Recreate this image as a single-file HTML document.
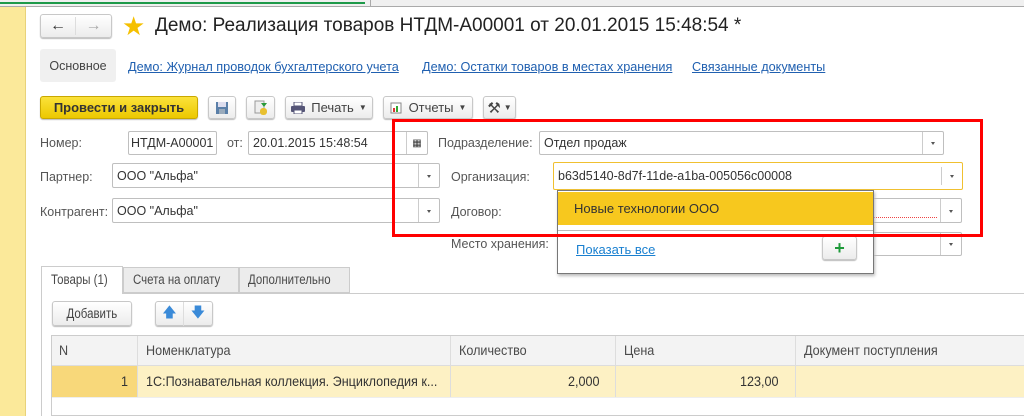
<!DOCTYPE html>
<html><head><meta charset="utf-8"><style>
*{box-sizing:border-box;margin:0;padding:0}
body{width:1024px;height:416px;overflow:hidden;background:#fff;font-family:"Liberation Sans",Arial,sans-serif;font-size:13px;color:#4a4a4a;position:relative}
.a{position:absolute;white-space:nowrap}
.inp{position:absolute;border:1px solid #bfbfbf;border-radius:2px;background:#fff;color:#333;font-size:12.5px;padding-left:4px;display:flex;align-items:center;white-space:nowrap;overflow:hidden}
.dd{position:absolute;right:0;top:0;bottom:0;width:21px;border-left:1px solid #ccc}
.dd:after{content:"";position:absolute;left:8px;top:50%;margin-top:-1px;border:2.5px solid transparent;border-top:3px solid #555}
.btn{position:absolute;border:1px solid #c8c8c8;border-radius:3px;background:linear-gradient(#fff,#ececec);box-shadow:0 1px 1px #bbb;display:flex;align-items:center;justify-content:center;color:#444;font-size:13px;white-space:nowrap}
.lnk{position:absolute;color:#2060b0;text-decoration:underline;font-size:12.7px;white-space:nowrap}
.lbl{position:absolute;font-size:12.5px;color:#555;white-space:nowrap}
.n{font-size:13.5px;transform:scaleX(.85);transform-origin:left;display:inline-block}
.w{font-size:14px;transform:scaleX(.9)}
</style></head><body>
<div class="a" style="left:0;top:0;width:1024px;height:7px;background:#f0f0f0;border-bottom:1px solid #aaa"></div>
<div class="a" style="left:0;top:2px;width:365px;height:2px;background:#1e9a4a"></div>
<div class="a" style="left:370px;top:0;width:1px;height:7px;background:#aaa"></div>
<div class="a" style="left:0;top:7px;width:26px;height:409px;background:#fbe99a;border-right:1px solid #e8d27a"></div>

<div class="btn" style="left:40px;top:14px;width:72px;height:24px;justify-content:flex-start">
<span style="width:36px;text-align:center;font-size:16px;color:#333;border-right:1px solid #ddd">&#8592;</span><span style="width:36px;text-align:center;font-size:16px;color:#aaa">&#8594;</span></div>
<div class="a" style="left:122px;top:13px;font-size:26px;color:#f5c000;line-height:26px">&#9733;</div>
<div class="a" style="left:155px;top:15px;font-size:19px;color:#222">Демо: Реализация товаров НТДМ-А00001 от 20.01.2015 15:48:54 *</div>

<div class="a" style="left:40px;top:49px;width:76px;height:33px;background:#f0f0f0;border-radius:3px;display:flex;align-items:center;justify-content:center;font-size:12.5px;color:#444">Основное</div>
<div class="lnk" style="left:128px;top:60px">Демо: Журнал проводок бухгалтерского учета</div>
<div class="lnk" style="left:422px;top:60px">Демо: Остатки товаров в местах хранения</div>
<div class="lnk" style="left:692px;top:60px">Связанные документы</div>

<div class="btn" style="left:40px;top:96px;width:158px;height:23px;background:linear-gradient(#fbe23a,#ecc800);border-color:#c9a800;font-weight:bold;color:#333">Провести и закрыть</div>
<div class="btn" style="left:208px;top:96px;width:28px;height:23px"><svg width="14" height="14"><rect x="1" y="1" width="12" height="12" fill="#5a7fa8"/><rect x="3" y="1" width="8" height="5" fill="#dde"/><rect x="4" y="8" width="6" height="5" fill="#9ab"/></svg></div>
<div class="btn" style="left:246px;top:96px;width:29px;height:23px"><svg width="16" height="16"><rect x="2" y="1" width="9" height="12" fill="#eee" stroke="#999"/><rect x="7" y="8" width="7" height="7" rx="3" fill="#e8c030"/><path d="M8 3h6l-3 4z" fill="#2a9a3a"/></svg></div>
<div class="btn" style="left:285px;top:96px;width:88px;height:23px"><svg width="14" height="12" style="margin-right:6px"><rect x="3" y="0" width="8" height="4" fill="#fff" stroke="#557"/><rect x="0" y="4" width="14" height="6" rx="1" fill="#557"/><rect x="3" y="8" width="8" height="4" fill="#fff" stroke="#557"/></svg>Печать <span style="font-size:8px;margin-left:5px">▼</span></div>
<div class="btn" style="left:383px;top:96px;width:90px;height:23px"><svg width="12" height="12" style="margin-right:7px"><rect x="1" y="1" width="10" height="10" fill="#fff" stroke="#888"/><rect x="3" y="6" width="2" height="4" fill="#d33"/><rect x="6" y="4" width="2" height="6" fill="#3a3"/></svg>Отчеты <span style="font-size:8px;margin-left:5px">▼</span></div>
<div class="btn" style="left:483px;top:96px;width:33px;height:23px;font-size:15px">&#9874;<span style="font-size:8px;margin-left:3px">▼</span></div>

<div class="lbl" style="left:40px;top:136px">Номер:</div>
<div class="inp" style="left:128px;top:131px;width:89px;height:24px;padding-left:2px">НТДМ-А00001</div>
<div class="lbl" style="left:227px;top:136px">от:</div>
<div class="inp" style="left:248px;top:131px;width:180px;height:24px">20.01.2015 15:48:54<div class="a" style="right:0;top:0;bottom:0;width:21px;border-left:1px solid #ccc;font-size:10px;display:flex;align-items:center;justify-content:center">▦</div></div>
<div class="lbl" style="left:438px;top:136px">Подразделение:</div>
<div class="inp" style="left:539px;top:131px;width:405px;height:24px">Отдел продаж<div class="dd"></div></div>

<div class="lbl" style="left:40px;top:170px">Партнер:</div>
<div class="inp" style="left:112px;top:163px;width:328px;height:25px">ООО "Альфа"<div class="dd"></div></div>
<div class="lbl" style="left:451px;top:170px">Организация:</div>
<div class="inp" style="left:553px;top:162px;width:410px;height:28px;border:1px solid #f0c030">b63d5140-8d7f-11de-a1ba-005056c00008<div class="dd" style="top:4px;bottom:4px"></div></div>

<div class="lbl" style="left:40px;top:205px">Контрагент:</div>
<div class="inp" style="left:112px;top:198px;width:328px;height:25px">ООО "Альфа"<div class="dd"></div></div>
<div class="lbl" style="left:451px;top:205px">Договор:</div>
<div class="inp" style="left:860px;top:198px;width:102px;height:25px;border-left:none"><div class="a" style="left:0;right:24px;top:18px;border-top:1px dotted #e44"></div><div class="dd"></div></div>
<div class="lbl" style="left:451px;top:237px">Место хранения:</div>
<div class="inp" style="left:860px;top:232px;width:102px;height:24px;border-left:none"><div class="dd"></div></div>

<div class="a" style="left:557px;top:190px;width:317px;height:84px;background:#fff;border:1px solid #777;box-shadow:1px 2px 3px #bbb"></div>
<div class="a" style="left:558px;top:192px;width:315px;height:33px;background:#f7c81e;font-size:13px;color:#333;padding:9px 0 0 16px">Новые технологии ООО</div>
<div class="a" style="left:558px;top:230px;width:315px;height:1px;background:#bbb"></div>
<div class="lnk" style="left:576px;top:242px;font-size:13px;color:#1a80d0">Показать все</div>
<div class="btn" style="left:822px;top:236px;width:35px;height:24px;color:#1e9a3a;font-size:18px;font-weight:bold">+</div>

<div class="a" style="left:392px;top:119px;width:591px;height:118px;border:3px solid #f00"></div>

<div class="a" style="left:41px;top:293px;width:983px;height:123px;border-left:1px solid #ccc;border-top:1px solid #ccc"></div>
<div class="a" style="left:41px;top:266px;width:82px;height:28px;background:#fff;border:1px solid #ccc;border-bottom:none;padding:5px 0 0 9px"><span class="n">Товары (1)</span></div>
<div class="a" style="left:123px;top:267px;width:116px;height:26px;background:#ececec;border:1px solid #ccc;padding:4px 0 0 9px"><span class="n">Счета на оплату</span></div>
<div class="a" style="left:239px;top:267px;width:111px;height:26px;background:#ececec;border:1px solid #ccc;padding:4px 0 0 8px"><span class="n">Дополнительно</span></div>

<div class="btn" style="left:52px;top:301px;width:80px;height:25px"><span class="n" style="transform-origin:center">Добавить</span></div>
<div class="btn" style="left:155px;top:301px;width:58px;height:25px;color:#3a8ad8;font-size:14px"><span style="width:29px;text-align:center;border-right:1px solid #ddd">&#129093;</span><span style="width:29px;text-align:center">&#129095;</span></div>

<div class="a" style="left:51px;top:335px;width:973px;height:81px;border:1px solid #ccc;border-right:none"></div>
<div class="a" style="left:52px;top:336px;width:972px;height:30px;background:#f3f3f3;border-bottom:1px solid #ddd"></div>
<div class="a" style="left:52px;top:366px;width:85px;height:31px;background:#f8d87a"></div>
<div class="a" style="left:137px;top:366px;width:887px;height:31px;background:#fdf1c4"></div>
<div class="a" style="left:52px;top:397px;width:972px;height:1px;background:#eee"></div>
<div class="a" style="left:137px;top:336px;width:1px;height:61px;background:#ddd"></div>
<div class="a" style="left:450px;top:336px;width:1px;height:61px;background:#ddd"></div>
<div class="a" style="left:615px;top:336px;width:1px;height:61px;background:#ddd"></div>
<div class="a" style="left:795px;top:336px;width:1px;height:61px;background:#ddd"></div>
<div class="a" style="left:59px;top:342px"><span class="n w">N</span></div>
<div class="a" style="left:146px;top:342px"><span class="n w">Номенклатура</span></div>
<div class="a" style="left:459px;top:342px"><span class="n w">Количество</span></div>
<div class="a" style="left:624px;top:342px"><span class="n w">Цена</span></div>
<div class="a" style="left:804px;top:342px"><span class="n w">Документ поступления</span></div>
<div class="a" style="left:121px;top:373px;color:#333"><span class="n w">1</span></div>
<div class="a" style="left:146px;top:373px;color:#333"><span class="n w">1С:Познавательная коллекция. Энциклопедия к...</span></div>
<div class="a" style="left:568px;top:373px;color:#333"><span class="n w">2,000</span></div>
<div class="a" style="left:740px;top:373px;color:#333"><span class="n w">123,00</span></div>
</body></html>
